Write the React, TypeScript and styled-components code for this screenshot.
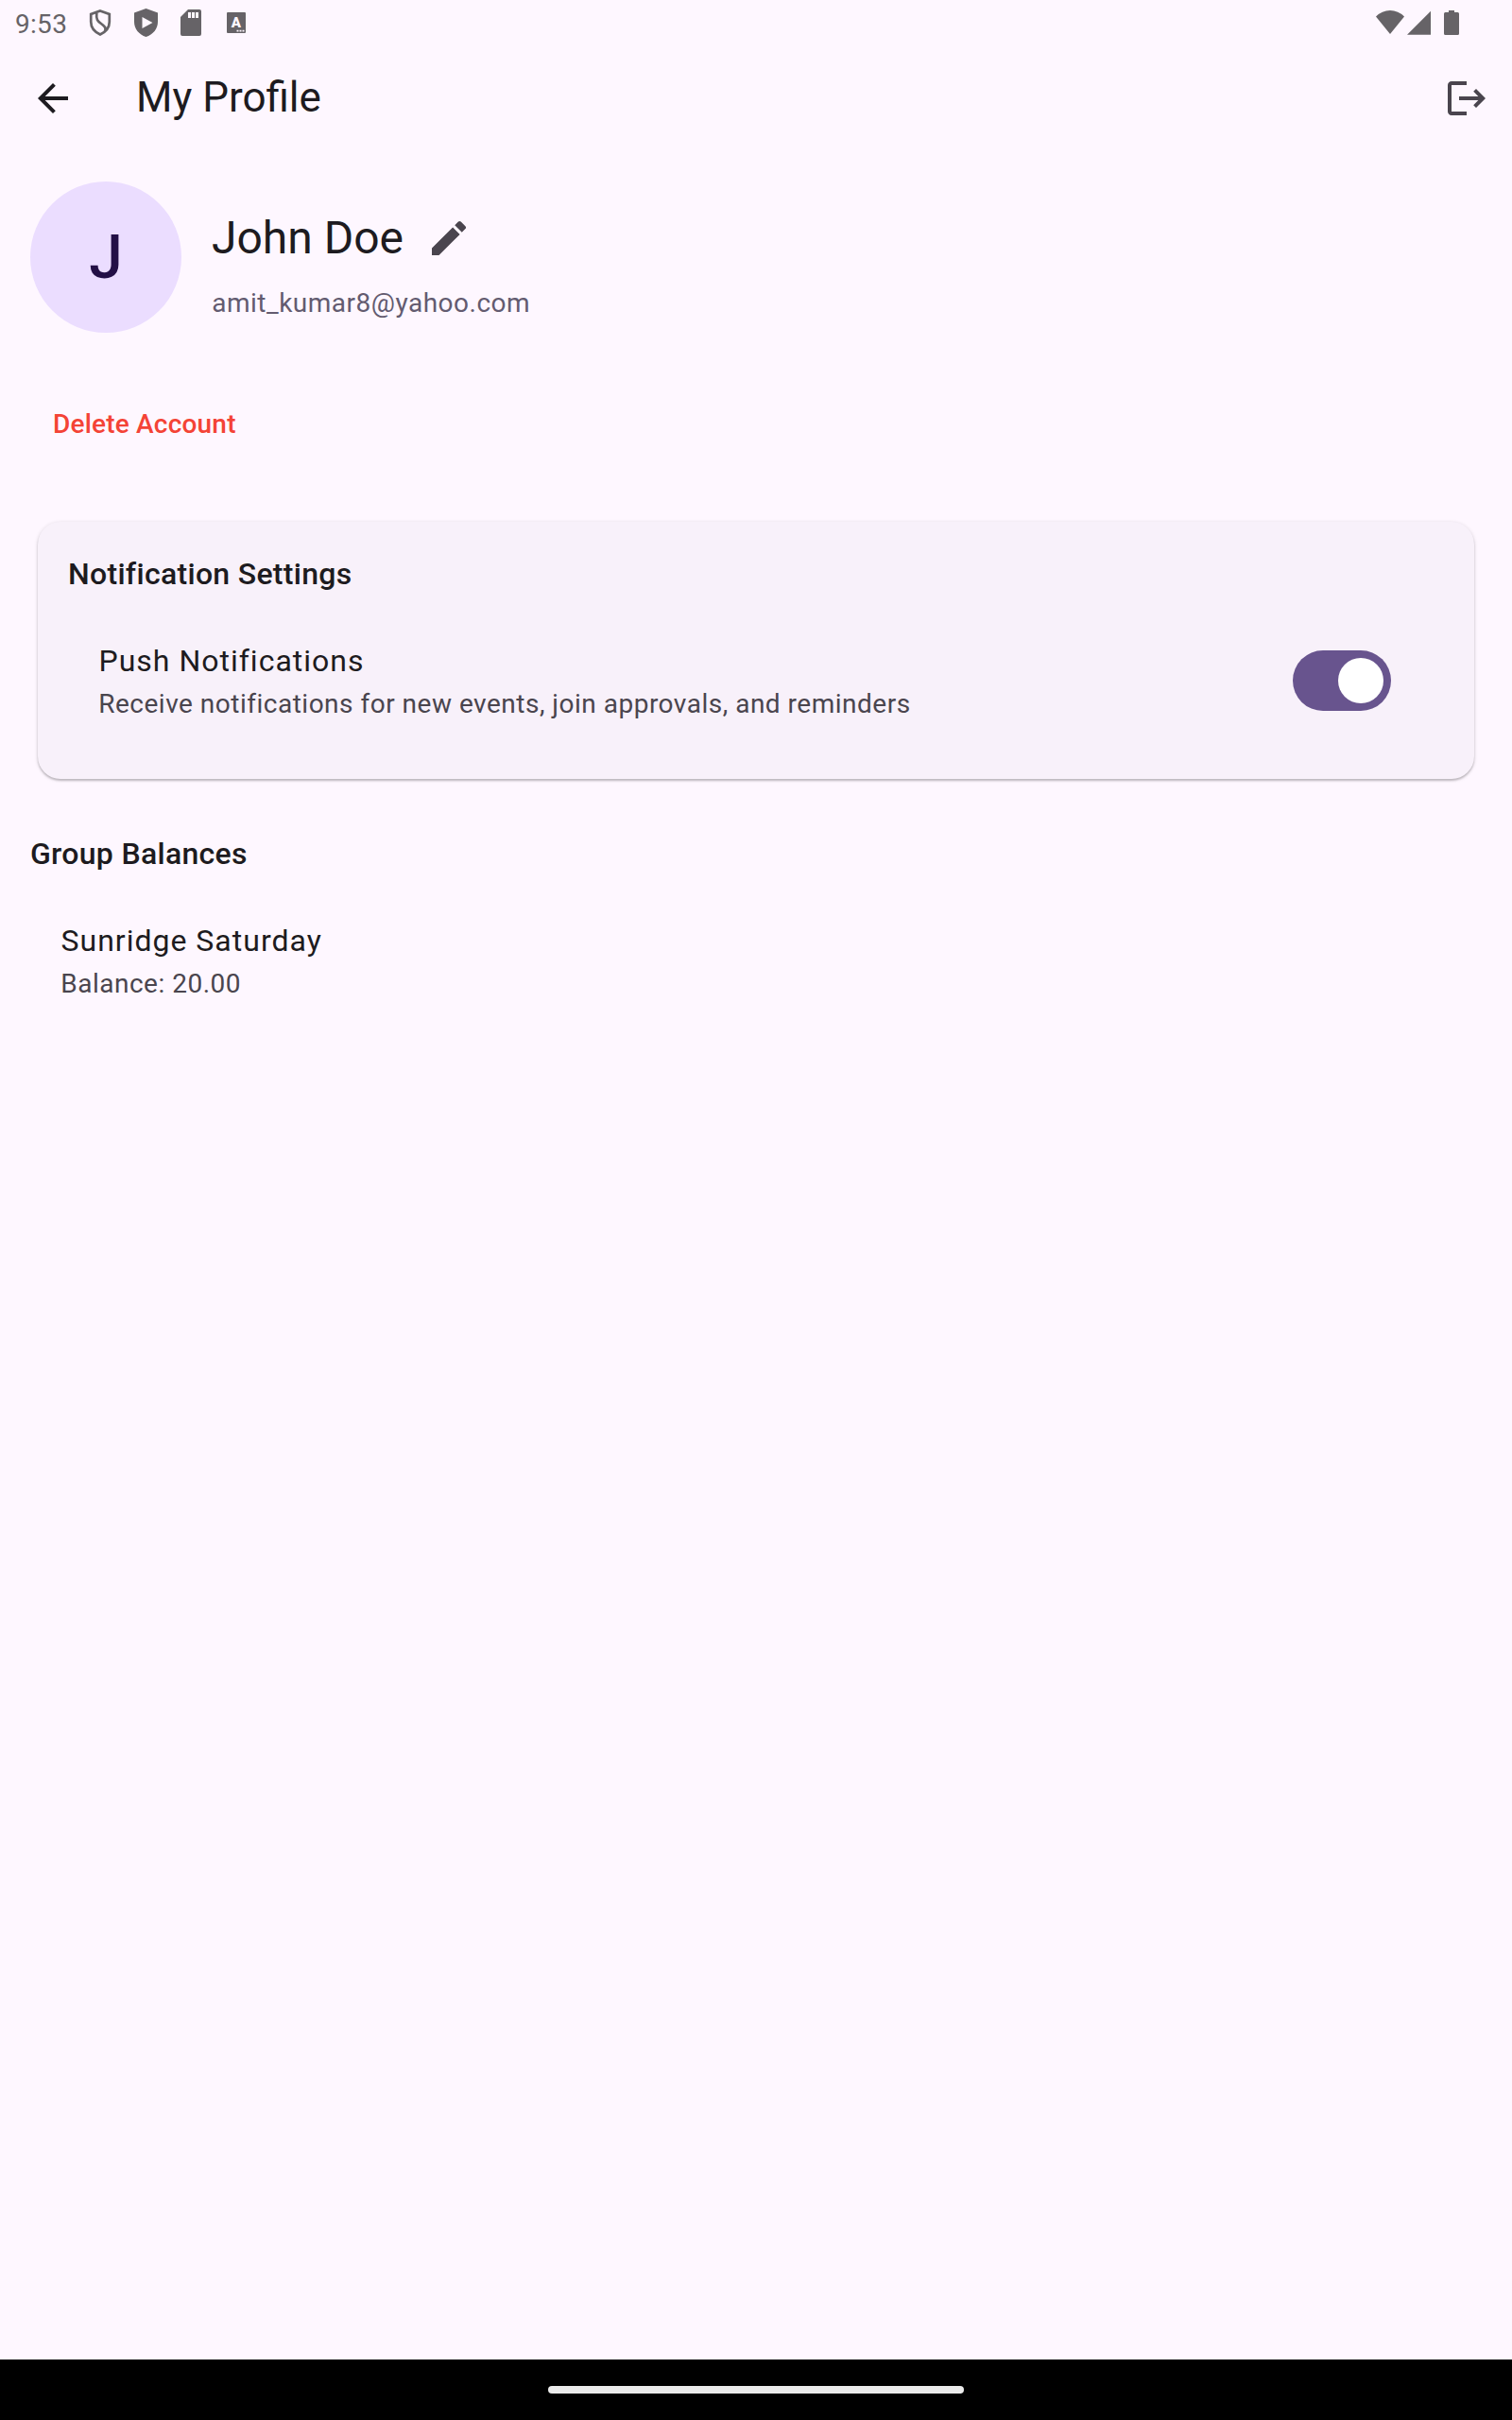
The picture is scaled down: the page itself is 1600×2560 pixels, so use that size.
import React, { useState } from "react";
import styled, { createGlobalStyle } from "styled-components";

const GlobalStyle = createGlobalStyle`
  *, *::before, *::after { box-sizing: border-box; }
  body { margin: 0; background: #fef7ff; }
  button { font: inherit; border: 0; padding: 0; background: none; cursor: pointer; }
  h1, h2, p { margin: 0; font-weight: 400; }
`;

const Screen = styled.div`
  display: flex;
  flex-direction: column;
  width: 1600px;
  height: 2560px;
  background: #fef7ff;
  color: #1d1b20;
  font-family: Roboto, "Noto Sans", sans-serif;
`;

const StatusBar = styled.header`
  display: flex;
  align-items: center;
  justify-content: space-between;
  height: 48px;
  padding: 0 56px 0 16px;
  color: #666367;
`;

const StatusGroup = styled.div<{ $gap?: number }>`
  display: flex;
  align-items: center;
  gap: ${(p) => p.$gap ?? 0}px;
`;

const StatusCell = styled.span`
  display: flex;
  align-items: center;
  justify-content: center;
  width: 48px;
  height: 48px;
`;

const Clock = styled.span`
  width: 66px;
  padding-top: 4px;
  font-size: 28px;
  line-height: 48px;
  letter-spacing: 0.3px;
`;

const Glyph = styled.svg<{ $w?: number; $h?: number }>`
  display: block;
  flex: none;
  width: ${(p) => p.$w ?? 48}px;
  height: ${(p) => p.$h ?? 48}px;
  fill: currentColor;
`;

const GlyphLetter = styled.text`
  font-size: 15px;
  font-weight: 900;
  text-anchor: middle;
  fill: #fef7ff;
`;

const AppBar = styled.nav`
  display: flex;
  align-items: center;
  height: 112px;
`;

const IconButton = styled.button<{ $size?: number; $tone?: string }>`
  display: flex;
  flex: none;
  align-items: center;
  justify-content: center;
  width: ${(p) => p.$size ?? 96}px;
  height: ${(p) => p.$size ?? 96}px;
  color: ${(p) => p.$tone ?? "#4a454e"};
`;

const BarTitle = styled.h1`
  flex: 1;
  padding: 0 0 2px 32px;
  font-size: 44px;
  line-height: 54px;
`;

const Content = styled.main`
  flex: 1;
  padding: 32px;
`;

const Profile = styled.section`
  display: flex;
  align-items: center;
  gap: 32px;
  height: 160px;
`;

const Avatar = styled.div`
  display: flex;
  align-items: center;
  justify-content: center;
  width: 160px;
  height: 160px;
  border-radius: 50%;
  background: #ebddff;
  color: #230f46;
  font-size: 64px;
  font-weight: 500;
`;

const NameRow = styled.div`
  display: flex;
  align-items: center;
  height: 96px;
`;

const Name = styled.h2`
  font-size: 48px;
  line-height: 64px;
`;

const BodyText = styled.p<{ $tone?: string }>`
  padding-top: 2px;
  font-size: 28px;
  line-height: 38px;
  letter-spacing: 0.5px;
  text-indent: 0.25px;
  color: ${(p) => p.$tone ?? "#4a454e"};
`;

const DeleteButton = styled.button`
  display: block;
  height: 80px;
  margin-top: 56px;
  padding: 2px 24px 0;
  font-size: 28px;
  font-weight: 500;
  line-height: 38px;
  letter-spacing: 0.2px;
  color: #f44336;
`;

const Card = styled.section`
  height: 272px;
  margin: 64px 8px 0;
  padding: 32px;
  border-radius: 24px;
  background: #f8f1fa;
  box-shadow: 0 2px 2px rgba(0, 0, 0, 0.18), 0 1px 4px rgba(0, 0, 0, 0.14);
`;

const Heading = styled.h2`
  padding-bottom: 2px;
  font-size: 32px;
  font-weight: 500;
  line-height: 46px;
  letter-spacing: 0.3px;
`;

const Balances = styled.section`
  padding-top: 56px;
`;

const Tile = styled.div`
  display: flex;
  align-items: center;
  justify-content: space-between;
  height: 144px;
  margin-top: 16px;
  padding: 0 48px 0 32px;
`;

const TileTitle = styled.p`
  padding-bottom: 2px;
  font-size: 32px;
  line-height: 46px;
  letter-spacing: 1px;
  text-indent: 0.5px;
`;

const Switch = styled.button<{ $on: boolean }>`
  display: flex;
  align-items: center;
  justify-content: ${(p) => (p.$on ? "flex-end" : "flex-start")};
  width: 104px;
  height: 64px;
  margin-right: 8px;
  padding: 8px;
  border-radius: 32px;
  background: ${(p) => (p.$on ? "#68548e" : "#e7e0e8")};
`;

const Thumb = styled.span`
  width: 48px;
  height: 48px;
  border-radius: 50%;
  background: #fff;
`;

const GestureBar = styled.footer`
  display: flex;
  align-items: center;
  justify-content: center;
  height: 64px;
  background: #000;
`;

const Pill = styled.span`
  width: 440px;
  height: 8px;
  border-radius: 4px;
  background: #ebebeb;
`;

function ListTile({ title, text, children }: { title: string; text: string; children?: React.ReactNode }) {
  return (
    <Tile>
      <div>
        <TileTitle>{title}</TileTitle>
        <BodyText>{text}</BodyText>
      </div>
      {children}
    </Tile>
  );
}

export default function App() {
  const [push, setPush] = useState(true);
  return (
    <Screen>
      <GlobalStyle />
      <StatusBar>
        <StatusGroup>
          <Clock>9:53</Clock>
          <StatusCell>
            <Glyph $w={24} $h={30} viewBox="0 0 24 30">
              <path
                d="M12 2.500 21.800 6V14c0 6.500-4 10.800-9.800 13.500C6.200 24.800 2.200 20.500 2.200 14V6ZM8.300 4.500C7.500 12 9.500 13.500 13 16s6 4.500 3.800 8.500"
                fill="none"
                stroke="currentColor"
                strokeWidth="2.700"
              />
            </Glyph>
          </StatusCell>
          <StatusCell>
            <Glyph $w={25} $h={30} viewBox="0 0 25 30">
              <path fillRule="evenodd" d="M12.500 0 25 4.500V14c0 7.500-5 13.500-12.500 16C5 27.500 0 21.500 0 14V4.500ZM8.500 9v12l11-6Z" />
            </Glyph>
          </StatusCell>
          <StatusCell>
            <Glyph $w={22} $h={28} viewBox="0 0 22 28">
              <path fillRule="evenodd" d="M8 0H20a2 2 0 0 1 2 2V26a2 2 0 0 1-2 2H2a2 2 0 0 1-2-2V8ZM8 3v6h3V3ZM12 3v6h3V3ZM16 3v6h3V3Z" />
            </Glyph>
          </StatusCell>
          <StatusCell>
            <Glyph $w={20} $h={22} viewBox="0 0 20 22">
              <path
                fillRule="evenodd"
                d="M1 0H19a1 1 0 0 1 1 1V21a1 1 0 0 1-1 1H1a1 1 0 0 1-1-1V1A1 1 0 0 1 1 0ZM10.500 18.700v1.800h2v-1.800ZM13.500 18.700v1.800h2v-1.800ZM16.500 18.700v1.800h2v-1.800Z"
              />
              <GlyphLetter x="9.800" y="16">A</GlyphLetter>
            </Glyph>
          </StatusCell>
        </StatusGroup>
        <StatusGroup $gap={14}>
          <StatusGroup $gap={3}>
            <Glyph $w={30} $h={26} viewBox="0 0 30 26">
              <path d="M0 6.500Q6.500 0 15 0T30 6.500L15 25Z" />
            </Glyph>
            <Glyph $w={25} $h={26} viewBox="0 0 25 26">
              <path d="M25 .8V25.700H0Z" />
            </Glyph>
          </StatusGroup>
          <Glyph $w={16} $h={26} viewBox="0 0 16 26">
            <path d="M5 0h6v2h3.500A1.500 1.500 0 0 1 16 3.500v21a1.500 1.500 0 0 1-1.500 1.500h-13A1.500 1.500 0 0 1 0 24.500v-21A1.500 1.500 0 0 1 1.500 2H5Z" />
          </Glyph>
        </StatusGroup>
      </StatusBar>

      <AppBar>
        <IconButton $size={112} $tone="#1d1b20" aria-label="Back">
          <Glyph viewBox="0 0 24 24">
            <path d="M20 11H7.830l5.590-5.590L12 4l-8 8 8 8 1.410-1.410L7.830 13H20v-2z" />
          </Glyph>
        </IconButton>
        <BarTitle>My Profile</BarTitle>
        <IconButton aria-label="Log out">
          <Glyph viewBox="0 0 24 24">
            <path d="M17 7l-1.410 1.410L18.170 11H8v2h10.170l-2.580 2.580L17 17l5-5zM4 5h8V3H4c-1.100 0-2 .9-2 2v14c0 1.100.9 2 2 2h8v-2H4V5z" />
          </Glyph>
        </IconButton>
      </AppBar>

      <Content>
        <Profile>
          <Avatar>J</Avatar>
          <div>
            <NameRow>
              <Name>John Doe</Name>
              <IconButton aria-label="Edit name">
                <Glyph viewBox="0 0 24 24">
                  <path d="M3 17.250V21h3.750L17.810 9.940l-3.750-3.750L3 17.250zM20.710 7.040a1 1 0 0 0 0-1.410l-2.340-2.340a1 1 0 0 0-1.410 0l-1.830 1.830 3.750 3.750 1.830-1.830z" />
                </Glyph>
              </IconButton>
            </NameRow>
            <BodyText $tone="#635b70">amit_kumar8@yahoo.com</BodyText>
          </div>
        </Profile>

        <DeleteButton>Delete Account</DeleteButton>

        <Card>
          <Heading>Notification Settings</Heading>
          <ListTile
            title="Push Notifications"
            text="Receive notifications for new events, join approvals, and reminders"
          >
            <Switch $on={push} role="switch" aria-checked={push} aria-label="Push Notifications" onClick={() => setPush(!push)}>
              <Thumb />
            </Switch>
          </ListTile>
        </Card>

        <Balances>
          <Heading>Group Balances</Heading>
          <ListTile title="Sunridge Saturday" text="Balance: 20.00" />
        </Balances>
      </Content>

      <GestureBar>
        <Pill />
      </GestureBar>
    </Screen>
  );
}
